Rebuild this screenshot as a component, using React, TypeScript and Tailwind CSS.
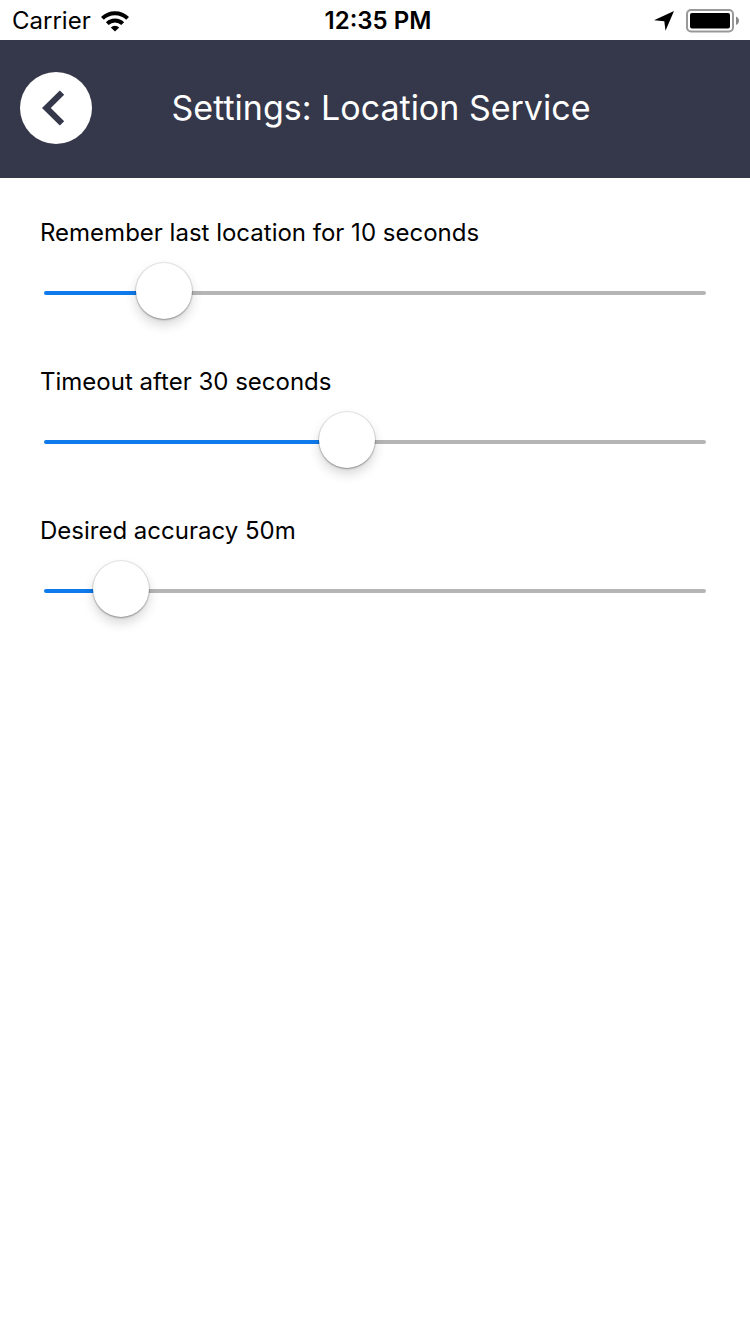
import { useId, useState } from "react";
import type { CSSProperties } from "react";

function WifiIcon() {
  return (
    <svg viewBox="0 0 28 21" className="h-[21px] w-7" fill="none" stroke="#000" strokeWidth="4" aria-hidden="true">
      <path d="M1.4 7.4A17.8 17.8 0 0 1 26.6 7.4" />
      <path d="M6.3 12.6A10.9 10.9 0 0 1 21.7 12.6" />
      <path d="M14 20.6L9.8 16.4a6 6 0 0 1 8.4 0z" fill="#000" stroke="none" />
    </svg>
  );
}

function StatusBar() {
  return (
    <div className="grid h-10 grid-cols-3 items-center pt-0.5 pr-[10px] pl-3 text-2xl leading-8">
      <div className="flex items-center gap-[10px]">
        <span>Carrier</span>
        <WifiIcon />
      </div>
      <div className="pl-1 text-center font-semibold whitespace-nowrap">12:35 PM</div>
      <div className="flex items-center justify-end gap-3">
        <svg viewBox="0 0 20 20" className="size-5" aria-hidden="true">
          <path d="M20 0L11.500 19.800L10.300 10.300L0 9.200Z" fill="#000" />
        </svg>
        <svg viewBox="0 0 54 24" className="h-6 w-[54px]" aria-hidden="true">
          <rect x="1" y="1" width="46" height="21.500" rx="4" fill="none" stroke="#999" strokeWidth="2" />
          <rect x="4" y="4" width="40" height="15.500" rx="2" fill="#000" />
          <path d="M50 7.500C54 9 54 14.500 50 16Z" fill="#888" />
        </svg>
      </div>
    </div>
  );
}

function Header() {
  return (
    <header className="flex items-center bg-[#35374a] pt-8 pr-20 pb-[34px] pl-5 text-white">
      <button
        type="button"
        aria-label="Back"
        className="flex size-[72px] shrink-0 items-center justify-center rounded-full bg-white"
      >
        <svg viewBox="0 0 72 72" className="size-full" fill="#35374a" aria-hidden="true">
          <path d="M22 36L39.800 18.400L44.200 22.800L30.800 36L44.200 49.200L39.800 53.600Z" />
        </svg>
      </button>
      <h1 className="flex-1 text-center text-[34px] leading-10">Settings: Location Service</h1>
    </header>
  );
}

type SettingProps = {
  describe: (value: number) => string;
  initial: number;
  max: number;
};

function SliderSetting({ describe, initial, max }: SettingProps) {
  const id = useId();
  const [value, setValue] = useState(initial);
  const fill = { "--fill": `${(value / max) * 100}%` } as CSSProperties;

  return (
    <div className="flex flex-col gap-4">
      <label htmlFor={id} className="text-2xl leading-8">
        {describe(value)}
      </label>
      <input
        id={id}
        type="range"
        min={0}
        max={max}
        value={value}
        onChange={(event) => setValue(Number(event.target.value))}
        style={fill}
        className="mx-1 h-14 appearance-none bg-transparent [&::-webkit-slider-runnable-track]:h-1 [&::-webkit-slider-runnable-track]:rounded-full [&::-webkit-slider-runnable-track]:bg-[linear-gradient(to_right,#0f7aeb_var(--fill),#b5b5b5_var(--fill))] [&::-webkit-slider-thumb]:-mt-7 [&::-webkit-slider-thumb]:size-14 [&::-webkit-slider-thumb]:appearance-none [&::-webkit-slider-thumb]:rounded-full [&::-webkit-slider-thumb]:bg-white [&::-webkit-slider-thumb]:shadow-[0_0_0_1px_rgba(0,0,0,0.08),0_1px_2px_rgba(0,0,0,0.3),0_6px_12px_rgba(0,0,0,0.16)]"
      />
    </div>
  );
}

export default function App() {
  return (
    <div className="min-h-screen bg-white font-['Inter',sans-serif] text-black">
      <StatusBar />
      <Header />
      <main className="flex flex-col gap-[45px] px-10 pt-[39px]">
        <SliderSetting describe={(v) => `Remember last location for ${v} seconds`} initial={10} max={66} />
        <SliderSetting describe={(v) => `Timeout after ${v} seconds`} initial={30} max={66} />
        <SliderSetting describe={(v) => `Desired accuracy ${v}m`} initial={50} max={620} />
      </main>
    </div>
  );
}
